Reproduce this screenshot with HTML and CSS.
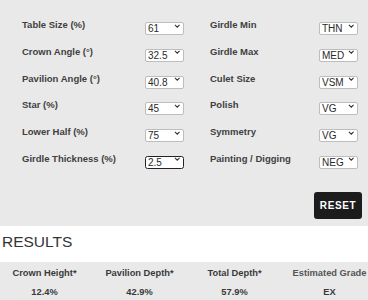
FILE: index.html
```html
<!DOCTYPE html>
<html lang="en">
<head>
  <meta charset="UTF-8">
  <title>Diamond Cut Grader</title>
  <meta name="viewport" content="width=device-width, initial-scale=1.0">
  <link rel="stylesheet" href="styles.css">
</head>
<body>
  <div class="inputs">
    <div class="grid">
      <div class="col left">
        <div class="row"><label>Table Size (%)</label><span class="sel"><select><option>61</option></select><svg viewBox="0 0 7 4"><path d="M1 .8l2.5 2.4 2.5-2.4"/></svg></span></div>
        <div class="row"><label>Crown Angle (°)</label><span class="sel"><select><option>32.5</option></select><svg viewBox="0 0 7 4"><path d="M1 .8l2.5 2.4 2.5-2.4"/></svg></span></div>
        <div class="row"><label>Pavilion Angle (°)</label><span class="sel"><select><option>40.8</option></select><svg viewBox="0 0 7 4"><path d="M1 .8l2.5 2.4 2.5-2.4"/></svg></span></div>
        <div class="row"><label>Star (%)</label><span class="sel"><select><option>45</option></select><svg viewBox="0 0 7 4"><path d="M1 .8l2.5 2.4 2.5-2.4"/></svg></span></div>
        <div class="row"><label>Lower Half (%)</label><span class="sel"><select><option>75</option></select><svg viewBox="0 0 7 4"><path d="M1 .8l2.5 2.4 2.5-2.4"/></svg></span></div>
        <div class="row"><label>Girdle Thickness (%)</label><span class="sel focus"><select><option>2.5</option></select><svg viewBox="0 0 7 4"><path d="M1 .8l2.5 2.4 2.5-2.4"/></svg></span></div>
      </div>
      <div class="col right">
        <div class="row"><label>Girdle Min</label><span class="sel"><select><option>THN</option></select><svg viewBox="0 0 7 4"><path d="M1 .8l2.5 2.4 2.5-2.4"/></svg></span></div>
        <div class="row"><label>Girdle Max</label><span class="sel"><select><option>MED</option></select><svg viewBox="0 0 7 4"><path d="M1 .8l2.5 2.4 2.5-2.4"/></svg></span></div>
        <div class="row"><label>Culet Size</label><span class="sel"><select><option>VSM</option></select><svg viewBox="0 0 7 4"><path d="M1 .8l2.5 2.4 2.5-2.4"/></svg></span></div>
        <div class="row"><label>Polish</label><span class="sel"><select><option>VG</option></select><svg viewBox="0 0 7 4"><path d="M1 .8l2.5 2.4 2.5-2.4"/></svg></span></div>
        <div class="row"><label>Symmetry</label><span class="sel"><select><option>VG</option></select><svg viewBox="0 0 7 4"><path d="M1 .8l2.5 2.4 2.5-2.4"/></svg></span></div>
        <div class="row"><label>Painting / Digging</label><span class="sel"><select><option>NEG</option></select><svg viewBox="0 0 7 4"><path d="M1 .8l2.5 2.4 2.5-2.4"/></svg></span></div>
      </div>
    </div>
    <div class="actions"><button class="reset">RESET</button></div>
  </div>

  <h2 class="title">RESULTS</h2>
  <div class="results">
    <div class="res"><div class="res-head">Crown Height*</div><div class="res-val">12.4%</div></div>
    <div class="res"><div class="res-head">Pavilion Depth*</div><div class="res-val">42.9%</div></div>
    <div class="res"><div class="res-head">Total Depth*</div><div class="res-val">57.9%</div></div>
    <div class="res"><div class="res-head light">Estimated Grade</div><div class="res-val">EX</div></div>
  </div>
</body>
</html>
```

FILE: styles.css
```css
body { margin: 0; font-family: "Liberation Sans", Arial, sans-serif; color: #444; background: #fff; overflow: hidden; }
.inputs { background: #e9e9e9; padding: 18px 6px 7px 22px; }
.grid { display: grid; grid-template-columns: 162px 148px; column-gap: 26px; }
.col { display: flex; flex-direction: column; gap: 13.8px; }
.row { display: flex; align-items: center; justify-content: space-between; height: 13px; }
.row label { font-size: 9.5px; font-weight: bold; color: #3f3f3f; }
.sel { position: relative; display: block; width: 39px; height: 13px; }
.sel select {
  appearance: none; -webkit-appearance: none; width: 100%; height: 100%; box-sizing: border-box;
  margin: 0; padding: 0 0 1px 2px; border: 1px solid #bdbdbd; border-radius: 2px; background: #fff;
  font-family: "Liberation Sans", Arial, sans-serif; font-size: 10px; color: #2a2a2a; line-height: 11px;
}
.sel.focus select { border: 1.5px solid #222; border-radius: 2.5px; }
.sel svg { position: absolute; right: 4px; top: 5.5px; width: 6.5px; height: 4px; fill: none; stroke: #333; stroke-width: 1.2; pointer-events: none; }
.actions { display: flex; justify-content: flex-end; margin-top: 27px; }
.reset {
  background: #1c1c1c; color: #fff; border: 0; border-radius: 3px; width: 48px; height: 27px;
  font-family: inherit; font-size: 10px; font-weight: bold; letter-spacing: 0.6px; padding: 0;
}
.title { margin: 7px 0 0 2px; height: 29px; font-size: 15.5px; font-weight: normal; color: #333; line-height: 18px; }
.results { background: #e9e9e9; display: grid; grid-template-columns: repeat(4, 95px); margin-left: -3px; padding-top: 6px; height: 40px; }
.res { text-align: center; }
.res-head { font-size: 9.3px; font-weight: bold; color: #3a3a3a; }
.res-head.light { color: #555; }
.res-val { font-size: 9.3px; font-weight: bold; color: #3a3a3a; margin-top: 9px; }
```
